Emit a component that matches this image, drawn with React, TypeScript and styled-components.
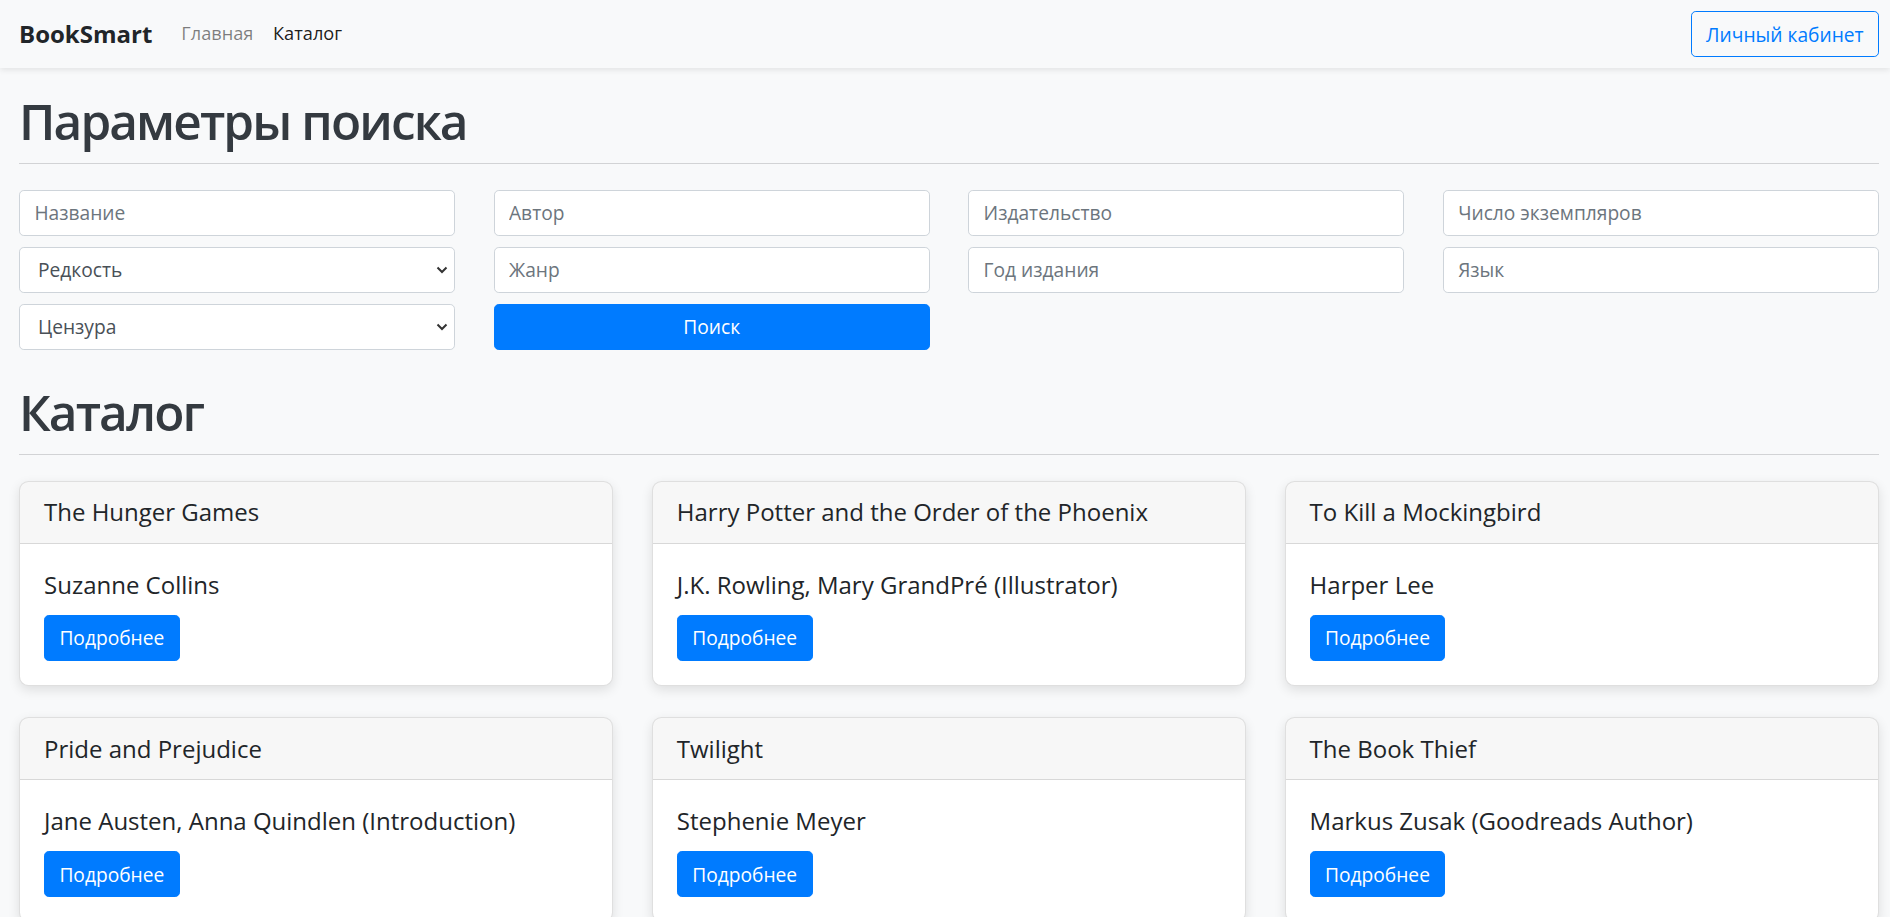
import React from "react";
import styled, { createGlobalStyle } from "styled-components";

const GlobalStyle = createGlobalStyle`
  *, *::before, *::after { box-sizing: border-box; }
  body {
    margin: 0;
    background: #f8f9fa;
    font-family: "Open Sans", "Noto Sans", sans-serif;
    font-size: 19.2px;
    line-height: 1.5;
    color: #212529;
  }
`;

const Navbar = styled.nav`
  position: relative;
  z-index: 1;
  display: flex;
  align-items: center;
  height: 68px;
  padding: 0 11px 0 19px;
  background: #f8f9fa;
  box-shadow: 0 2px 6px rgba(0, 0, 0, 0.09);
`;

const Brand = styled.a`
  font-size: 24px;
  font-weight: 700;
  color: #212529;
  margin-right: 19.2px;
  text-decoration: none;
`;

const NavList = styled.div`
  display: flex;
  flex: 1;
`;

const NavLink = styled.a<{ $active?: boolean }>`
  padding: 0 9.8px;
  font-size: 18.2px;
  color: ${(p) => (p.$active ? "rgba(0,0,0,0.9)" : "rgba(0,0,0,0.5)")};
  text-decoration: none;
`;

const OutlineButton = styled.button`
  height: 46px;
  padding: 0 14.4px;
  font-family: inherit;
  font-size: 19.2px;
  color: #007bff;
  background: transparent;
  border: 1.2px solid #007bff;
  border-radius: 4.8px;
`;

const Main = styled.main`
  padding: 22px 11px 40px 19px;
`;

const SectionTitle = styled.h1<{ $top?: number }>`
  margin: ${(p) => p.$top ?? 0}px 0 10.6px;
  font-size: 49.5px;
  font-weight: 600;
  letter-spacing: -1.9px;
  line-height: 62.4px;
  color: #343a40;
`;

const Divider = styled.hr`
  margin: 0 0 25.6px;
  border: 0;
  border-top: 1.3px solid #d2d3d5;
`;

const FilterGrid = styled.form`
  display: grid;
  grid-template-columns: repeat(4, 1fr);
  column-gap: 38.4px;
  row-gap: 11.2px;
`;

const fieldBase = `
  width: 100%;
  height: 46px;
  font-family: inherit;
  font-size: 19.2px;
  color: #495057;
  background-color: #fff;
  border: 1.2px solid #ced4da;
  border-radius: 4.8px;
  outline: none;
`;

const TextInput = styled.input`
  ${fieldBase}
  padding: 0 14.4px;
  &::placeholder {
    color: #6c757d;
  }
`;

const chevron =
  "url(\"data:image/svg+xml;utf8,<svg xmlns='http://www.w3.org/2000/svg' width='12' height='8' viewBox='0 0 12 8'><path d='M1.5 1.5 L6 6 L10.5 1.5' fill='none' stroke='%23333' stroke-width='2'/></svg>\")";

const SelectField = styled.select`
  ${fieldBase}
  appearance: none;
  padding: 0 30px 0 18px;
  background-image: ${chevron};
  background-repeat: no-repeat;
  background-position: right 6px center;
  background-size: 12px 8px;
`;

const SearchButton = styled.button`
  height: 46px;
  font-family: inherit;
  font-size: 19.2px;
  color: #fff;
  background: #007bff;
  border: 1.2px solid #007bff;
  border-radius: 4.8px;
`;

const CardGrid = styled.section`
  display: grid;
  grid-template-columns: repeat(3, 1fr);
  column-gap: 38.4px;
  row-gap: 31.7px;
`;

const Card = styled.article`
  background: #fff;
  border: 1.2px solid rgba(0, 0, 0, 0.125);
  border-radius: 9.6px;
  box-shadow: 0 4px 12px rgba(0, 0, 0, 0.11);
  overflow: hidden;
`;

const CardHeader = styled.h5`
  margin: 0;
  padding: 14.4px 24px;
  font-size: 24px;
  font-weight: 400;
  line-height: 31.8px;
  background: rgba(0, 0, 0, 0.03);
  border-bottom: 1.2px solid rgba(0, 0, 0, 0.125);
`;

const CardBody = styled.div`
  padding: 24px;
`;

const CardAuthor = styled.h5`
  margin: 0 0 12.6px;
  font-size: 24px;
  font-weight: 400;
  line-height: 34.6px;
`;

const PrimaryButton = styled.button`
  height: 46px;
  padding: 0 14.4px;
  font-family: inherit;
  font-size: 19.2px;
  color: #fff;
  background: #007bff;
  border: 1.2px solid #007bff;
  border-radius: 4.8px;
`;

const books = [
  { title: "The Hunger Games", author: "Suzanne Collins" },
  { title: "Harry Potter and the Order of the Phoenix", author: "J.K. Rowling, Mary GrandPré (Illustrator)" },
  { title: "To Kill a Mockingbird", author: "Harper Lee" },
  { title: "Pride and Prejudice", author: "Jane Austen, Anna Quindlen (Introduction)" },
  { title: "Twilight", author: "Stephenie Meyer" },
  { title: "The Book Thief", author: "Markus Zusak (Goodreads Author)" },
];

export default function App() {
  return (
    <>
      <GlobalStyle />
      <Navbar>
        <Brand href="#">BookSmart</Brand>
        <NavList>
          <NavLink href="#">Главная</NavLink>
          <NavLink href="#" $active>
            Каталог
          </NavLink>
        </NavList>
        <OutlineButton>Личный кабинет</OutlineButton>
      </Navbar>
      <Main>
        <SectionTitle>Параметры поиска</SectionTitle>
        <Divider />
        <FilterGrid onSubmit={(e) => e.preventDefault()}>
          <TextInput placeholder="Название" />
          <TextInput placeholder="Автор" />
          <TextInput placeholder="Издательство" />
          <TextInput placeholder="Число экземпляров" />
          <SelectField defaultValue="">
            <option value="">Редкость</option>
          </SelectField>
          <TextInput placeholder="Жанр" />
          <TextInput placeholder="Год издания" />
          <TextInput placeholder="Язык" />
          <SelectField defaultValue="">
            <option value="">Цензура</option>
          </SelectField>
          <SearchButton type="submit">Поиск</SearchButton>
        </FilterGrid>
        <SectionTitle $top={31.4}>Каталог</SectionTitle>
        <Divider />
        <CardGrid>
          {books.map((b) => (
            <Card key={b.title}>
              <CardHeader>{b.title}</CardHeader>
              <CardBody>
                <CardAuthor>{b.author}</CardAuthor>
                <PrimaryButton>Подробнее</PrimaryButton>
              </CardBody>
            </Card>
          ))}
        </CardGrid>
      </Main>
    </>
  );
}
